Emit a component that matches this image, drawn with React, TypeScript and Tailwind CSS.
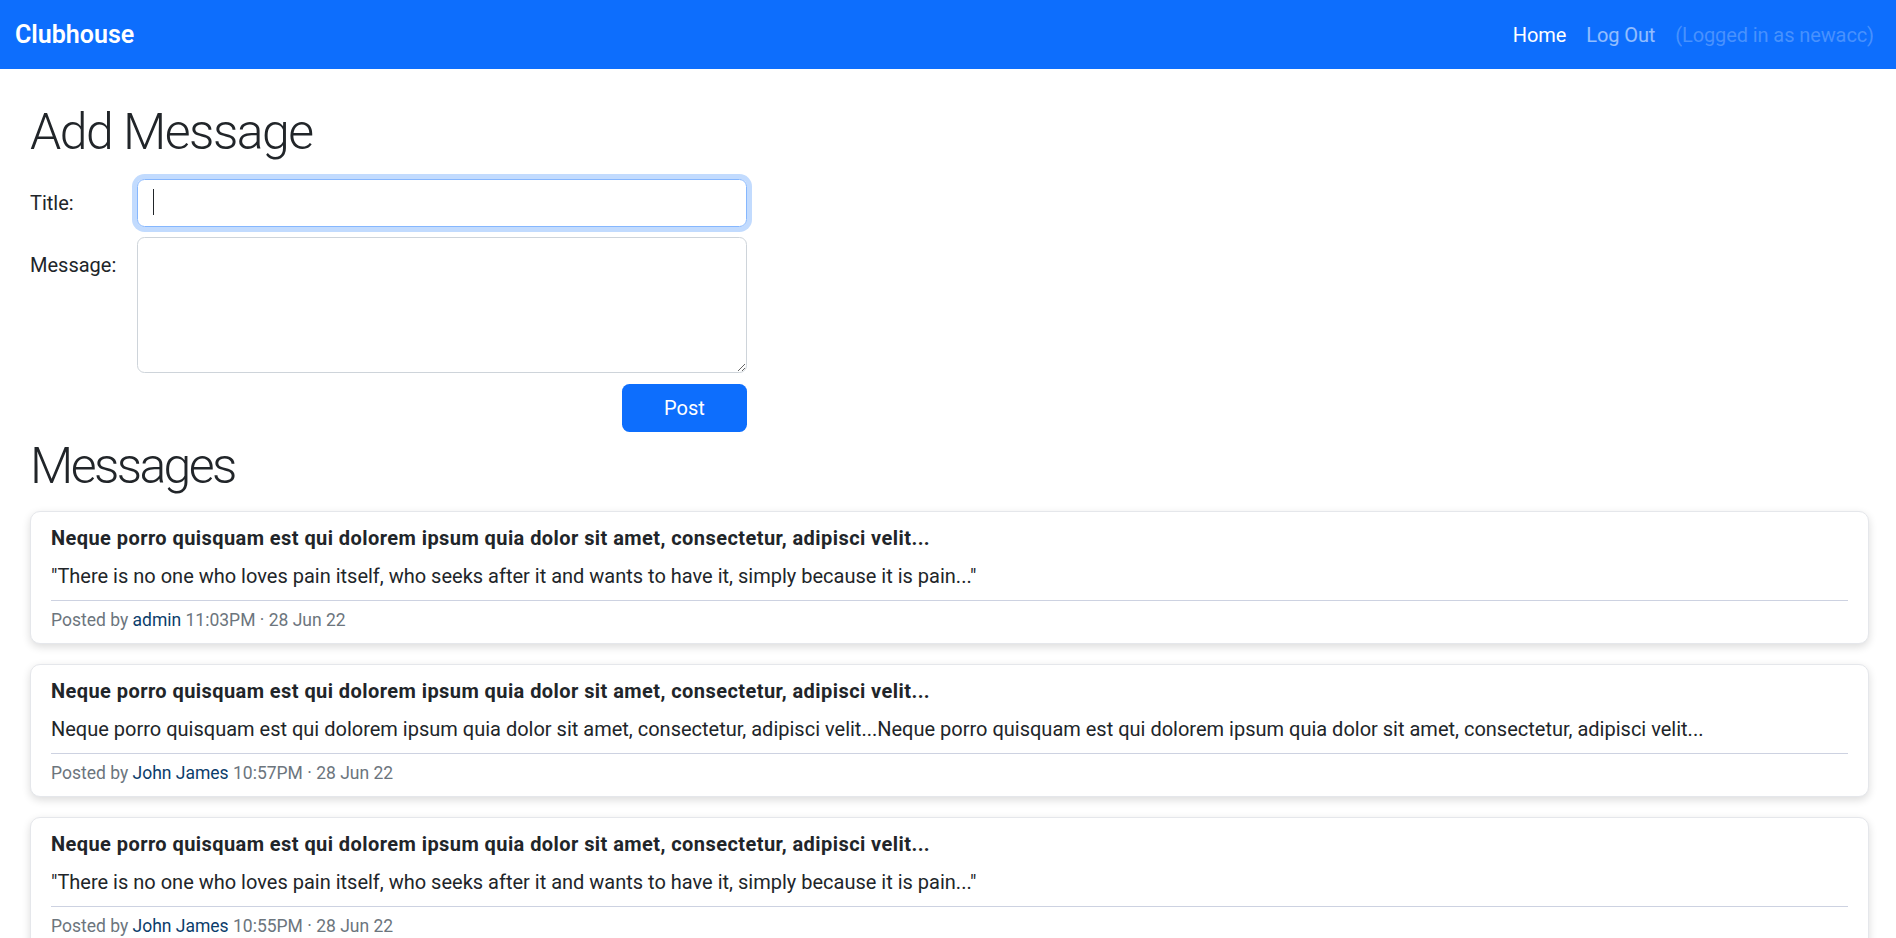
import React from "react";

type Message = {
  title: string;
  body: string;
  author: string;
  time: string;
};

const messages: Message[] = [
  {
    title: "Neque porro quisquam est qui dolorem ipsum quia dolor sit amet, consectetur, adipisci velit...",
    body: "\"There is no one who loves pain itself, who seeks after it and wants to have it, simply because it is pain...\"",
    author: "admin",
    time: "11:03PM · 28 Jun 22"
  },
  {
    title: "Neque porro quisquam est qui dolorem ipsum quia dolor sit amet, consectetur, adipisci velit...",
    body: "Neque porro quisquam est qui dolorem ipsum quia dolor sit amet, consectetur, adipisci velit...Neque porro quisquam est qui dolorem ipsum quia dolor sit amet, consectetur, adipisci velit...",
    author: "John James",
    time: "10:57PM · 28 Jun 22"
  },
  {
    title: "Neque porro quisquam est qui dolorem ipsum quia dolor sit amet, consectetur, adipisci velit...",
    body: "\"There is no one who loves pain itself, who seeks after it and wants to have it, simply because it is pain...\"",
    author: "John James",
    time: "10:55PM · 28 Jun 22"
  }
];

function Navbar() {
  return (
    <nav className="flex h-[69px] items-center justify-between bg-[#0d6efd] pl-[15px] pr-[12px]">
      <span className="text-[25px] font-semibold leading-none text-white">Clubhouse</span>
      <div className="flex items-center text-[20px] leading-[30px] tracking-[-0.1px]">
        <a className="px-[10px] text-white">Home</a>
        <a className="px-[10px] text-white/55">Log Out</a>
        <span className="px-[10px] text-white/25">(Logged in as newacc)</span>
      </div>
    </nav>
  );
}

function MessageCard({ message }: { message: Message }) {
  return (
    <div className="rounded-[10px] border border-[#e5e7eb] bg-white px-[20px] pt-[11px] pb-[9px] shadow-[0_3px_8px_rgba(0,0,0,0.14)]">
      <h5 className="text-[20px] font-bold leading-[30px] tracking-[0.43px] text-[#212529]">{message.title}</h5>
      <p className="mt-[8px] text-[20px] leading-[30px] text-[#212529]">{message.body}</p>
      <div className="mt-[9px] border-t border-[#cdd2e1] pt-[6px] text-[17.5px] leading-[27px] text-[#6c757d]">
        Posted by <span className="text-[#0b3d6b]">{message.author}</span> {message.time}
      </div>
    </div>
  );
}

export default function App() {
  return (
    <div className="min-h-screen bg-white font-['Roboto','Segoe_UI',sans-serif] text-[#212529]">
      <Navbar />
      <main className="pl-[30px] pr-[27px]">
        <h1 className="mt-[33px] text-[50px] font-light leading-[60px] tracking-[-1.5px]">Add Message</h1>

        <form className="mt-[17px] grid w-[717px] grid-cols-[107px_610px]">
          <label className="flex h-[48px] items-center text-[20px]">Title:</label>
          <div className="relative">
            <input
              className="h-[48px] w-full rounded-[7.5px] border border-[#86b7fe] px-[15px] text-[20px] shadow-[0_0_0_5px_rgba(13,110,253,0.25)] outline-none"
              type="text"
            />
            <span className="absolute left-[16px] top-[10px] h-[26px] w-px bg-[#212529]" />
          </div>

          <label className="mt-[10px] pt-[13px] text-[20px] leading-[30px]">Message:</label>
          <textarea className="mt-[10px] h-[136px] w-full rounded-[7.5px] border border-[#ced4da] px-[15px] py-[7px] text-[20px] outline-none" />

          <div />
          <div className="mt-[11px] flex justify-end">
            <button
              type="button"
              className="h-[48px] w-[125px] rounded-[7.5px] bg-[#0d6efd] text-[20px] text-white"
            >
              Post
            </button>
          </div>
        </form>

        <h1 className="mt-[4px] text-[50px] font-light leading-[60px] tracking-[-2.6px]">Messages</h1>

        <div className="mt-[15px] flex flex-col gap-[20px] pb-[20px]">
          {messages.map((message, index) => (
            <MessageCard key={index} message={message} />
          ))}
        </div>
      </main>
    </div>
  );
}
